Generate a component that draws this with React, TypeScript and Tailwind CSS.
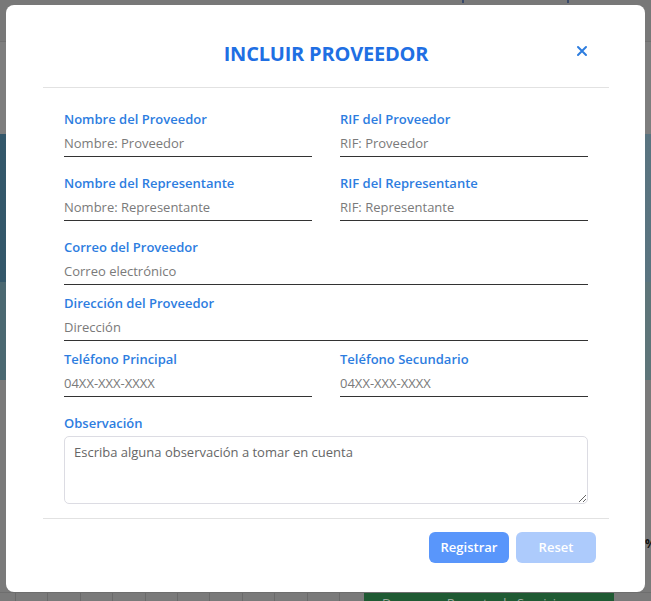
import React from "react";

const font = { fontFamily: '"Open Sans", "Noto Sans", sans-serif' };

function Field({ label, placeholder }: { label: string; placeholder: string }) {
  return (
    <div className="flex flex-col">
      <label className="text-[13px] leading-[20px] font-semibold text-[#2d7ddf]">{label}</label>
      <input
        className="mt-[1px] h-[27px] w-full border-b border-[#333333] bg-transparent text-[13px] text-[#333] outline-none placeholder:text-[#7a7a7a]"
        placeholder={placeholder}
      />
    </div>
  );
}

export default function App() {
  const cells = Array.from({ length: 10 });
  return (
    <div className="relative h-[601px] w-[651px] overflow-hidden bg-[#7a7a7a]" style={font}>
      {/* underlying page (dimmed) */}
      <div className="flex h-full flex-col">
        <div className="relative h-[42px] border-b border-[#707070] bg-[#787878]">
          <span className="absolute left-[462px] top-0 h-[3px] w-[2px] bg-[#3a4a6a]" />
          <span className="absolute left-[567px] top-0 h-[3px] w-[2px] bg-[#3a4a6a]" />
        </div>
        <div className="h-[92px] bg-[#7e7e7e]" />
        <div className="h-[148px] bg-gradient-to-r from-[#33576a] to-[#5a7480]" />
        <div className="h-[98px] bg-gradient-to-r from-[#4b6871] to-[#5e7579]" />
        <div className="relative flex-1 bg-[#7a7a7a]">
          <span className="absolute left-[645px] top-[155px] text-[12px] font-bold text-[#111]">%</span>
          <div className="absolute bottom-0 left-0 right-0 flex h-[9px] border-t border-[#6e6e6e]">
            <div className="flex w-[364px]">
              <div className="w-[16px] border-r border-[#6a6a6a]" />
              {cells.map((_, i) => (
                <div key={i} className="w-[32.4px] border-r border-[#6a6a6a]" />
              ))}
            </div>
            <div className="w-[250px] overflow-hidden bg-[#1f5a33] px-[18px] pt-[2px] text-[13px] leading-[16px] text-[#9aa89d]">
              Descargar Reporte de Servicios
            </div>
          </div>
        </div>
      </div>

      {/* modal */}
      <div className="absolute left-[6px] top-[5px] flex h-[587px] w-[639px] flex-col rounded-[8px] bg-white pl-[37px] pr-[36px]">
        <div className="relative flex justify-center border-b border-[#e2e2e2] pb-[19px] pt-[35px]">
          <h2 className="text-[20px] leading-[28px] font-bold tracking-[-0.2px] text-[#1f6fe3]">INCLUIR PROVEEDOR</h2>
          <button className="absolute right-[21px] top-[40px] h-[12px] w-[12px]">
            <svg viewBox="0 0 12 12" className="h-[12px] w-[12px]">
              <path d="M2 2 L10 10 M10 2 L2 10" stroke="#2d7ddf" strokeWidth="2" strokeLinecap="round" />
            </svg>
          </button>
        </div>

        <div className="px-[21px] pb-[14px] pt-[21px]">
          <div className="mb-4 grid grid-cols-2 gap-x-[28px]">
            <Field label="Nombre del Proveedor" placeholder="Nombre: Proveedor" />
            <Field label="RIF del Proveedor" placeholder="RIF: Proveedor" />
          </div>
          <div className="mb-4 grid grid-cols-2 gap-x-[28px]">
            <Field label="Nombre del Representante" placeholder="Nombre: Representante" />
            <Field label="RIF del Representante" placeholder="RIF: Representante" />
          </div>
          <div className="mb-2">
            <Field label="Correo del Proveedor" placeholder="Correo electrónico" />
          </div>
          <div className="mb-2">
            <Field label="Dirección del Proveedor" placeholder="Dirección" />
          </div>
          <div className="mb-4 grid grid-cols-2 gap-x-[28px]">
            <Field label="Teléfono Principal" placeholder="04XX-XXX-XXXX" />
            <Field label="Teléfono Secundario" placeholder="04XX-XXX-XXXX" />
          </div>
          <div className="flex flex-col">
            <label className="text-[13px] leading-[20px] font-semibold text-[#2d7ddf]">Observación</label>
            <textarea
              className="mt-[3px] block h-[68px] w-full rounded-[5px] border border-[#dcdce3] px-[9px] py-[5px] text-[13px] leading-[20px] text-[#333] outline-none placeholder:text-[#666]"
              placeholder="Escriba alguna observación a tomar en cuenta"
            />
          </div>
        </div>

        <div className="flex justify-end gap-[7px] border-t border-[#e2e2e2] pr-[13px] pt-[13px]">
          <button className="h-[31px] w-[80px] rounded-[6px] bg-[#5996fb] text-[13px] font-semibold text-white">Registrar</button>
          <button className="h-[31px] w-[80px] rounded-[6px] bg-[#adcbfc] text-[13px] font-semibold text-white">Reset</button>
        </div>
      </div>
    </div>
  );
}
